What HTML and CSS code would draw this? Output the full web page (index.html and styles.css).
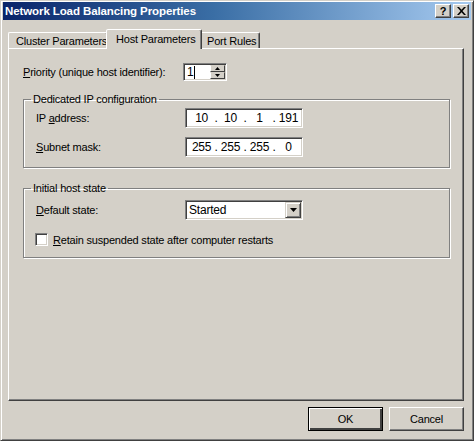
FILE: index.html
```html
<!DOCTYPE html>
<html>
<head>
<meta charset="utf-8">
<title>Network Load Balancing Properties</title>
<link rel="stylesheet" href="styles.css">
</head>
<body>
<div class="window">
  <div class="titlebar">
    <span class="title">Network Load Balancing Properties</span>
    <div class="caption-buttons">
      <span class="cap-btn help">?</span>
      <span class="cap-btn close">
        <svg width="9" height="8" viewBox="0 0 9 8"><path d="M0 0h2l2.5 2.7L7 0h2L5.5 4 9 8H7L4.5 5.3 2 8H0l3.5-4z" fill="#000"/></svg>
      </span>
    </div>
  </div>

  <div class="tabs">
    <div class="tab">Cluster Parameters</div>
    <div class="tab selected">Host Parameters</div>
    <div class="tab">Port Rules</div>
  </div>

  <div class="panel">
    <div class="row priority-row">
      <span class="label wide"><u>P</u>riority (unique host identifier):</span>
      <div class="spinner">
        <div class="spin-text">1<span class="caret"></span></div>
        <div class="spin-btns">
          <span class="spin-btn"><svg width="5" height="3" viewBox="0 0 5 3"><path d="M2.5 0 5 3H0z" fill="#000"/></svg></span>
          <span class="spin-btn"><svg width="5" height="3" viewBox="0 0 5 3"><path d="M0 0h5L2.5 3z" fill="#000"/></svg></span>
        </div>
      </div>
    </div>

    <fieldset class="group group-ip">
      <legend>Dedicated IP configuration</legend>
      <div class="row">
        <span class="label">IP <u>a</u>ddress:</span>
        <div class="ipbox">
          <span class="oct">10</span><span class="dot">.</span><span class="oct">10</span><span class="dot">.</span><span class="oct">1</span><span class="dot">.</span><span class="oct">191</span>
        </div>
      </div>
      <div class="row">
        <span class="label"><u>S</u>ubnet mask:</span>
        <div class="ipbox">
          <span class="oct">255</span><span class="dot">.</span><span class="oct">255</span><span class="dot">.</span><span class="oct">255</span><span class="dot">.</span><span class="oct">0</span>
        </div>
      </div>
    </fieldset>

    <fieldset class="group group-state">
      <legend>Initial host state</legend>
      <div class="row">
        <span class="label"><u>D</u>efault state:</span>
        <div class="select">
          <span class="select-text">Started</span>
          <span class="select-btn"><svg width="7" height="4" viewBox="0 0 7 4"><path d="M0 0h7L3.5 4z" fill="#000"/></svg></span>
        </div>
      </div>
      <div class="check-row">
        <span class="checkbox"></span>
        <span class="check-label"><u>R</u>etain suspended state after computer restarts</span>
      </div>
    </fieldset>
  </div>

  <div class="buttons">
    <div class="btn default">OK</div>
    <div class="btn">Cancel</div>
  </div>
</div>
</body>
</html>
```
FILE: styles.css
```css
* { box-sizing: border-box; }
html, body { margin: 0; padding: 0; }
body {
  width: 474px;
  height: 441px;
  background: #d4d0c8;
  font-family: "Liberation Sans", Arial, sans-serif;
  font-size: 11px;
  letter-spacing: -0.2px;
  color: #000;
  overflow: hidden;
}
.window {
  width: 474px;
  height: 441px;
  border: 1px solid;
  border-color: #d4d0c8 #404040 #404040 #d4d0c8;
  box-shadow: inset 1px 1px 0 #fff, inset -1px -1px 0 #808080;
  display: flex;
  flex-direction: column;
  padding: 1px 2px 0 2px;
}
.titlebar {
  height: 18px;
  background: linear-gradient(to right, #0a246a 0%, #3a6ea5 45%, #a6caf0 100%);
  display: flex;
  align-items: center;
  justify-content: space-between;
  padding: 0 2px 0 2px;
}
.title {
  color: #fff;
  font-weight: bold;
  font-size: 11.5px;
  letter-spacing: -0.1px;
}
.caption-buttons { display: flex; gap: 2px; }
.cap-btn {
  width: 16px;
  height: 14px;
  background: #d4d0c8;
  border: 1px solid;
  border-color: #fff #404040 #404040 #fff;
  box-shadow: inset -1px -1px 0 #808080;
  display: flex;
  align-items: center;
  justify-content: center;
  font-weight: bold;
  font-size: 11px;
  line-height: 1;
}
.tabs {
  display: flex;
  align-items: flex-end;
  height: 28px;
  padding-left: 5px;
}
.tab {
  height: 16px;
  padding: 0 4px 0 6px;
  border: 1px solid;
  border-bottom: none;
  border-color: #fff #404040 transparent #fff;
  box-shadow: inset -1px 0 0 #808080;
  border-radius: 2px 2px 0 0;
  display: flex;
  align-items: center;
  line-height: 14px;
  white-space: nowrap;
}
.tab:first-child { width: 100px; padding-left: 7px; }
.tab.selected {
  height: 20px;
  margin: 0 -2px -1px -2px;
  padding: 0 4px 2px 9px;
  width: 96px;
  background: #d4d0c8;
  z-index: 1;
}
.tab:last-child { width: 60px; padding-left: 6px; }
.panel {
  flex: 1;
  margin: 0 7px 0 5px;
  border: 1px solid;
  border-color: #fff #404040 #404040 #fff;
  box-shadow: inset -1px -1px 0 #808080;
  padding: 14px 0 0 14px;
  display: flex;
  flex-direction: column;
}
.row {
  display: flex;
  align-items: center;
}
.label { width: 149px; flex: none; }
.label.wide { width: 160px; }
.priority-row { height: 18px; }
.spinner {
  width: 44px;
  height: 18px;
  display: flex;
  background: #fff;
  border: 1px solid;
  border-color: #808080 #fff #fff #808080;
  box-shadow: inset 1px 1px 0 #404040, inset -1px -1px 0 #d4d0c8;
  padding: 2px 2px 2px 3px;
}
.spin-text {
  flex: 1;
  display: flex;
  align-items: center;
  line-height: 12px;
  font-size: 12px;
}
.caret {
  display: inline-block;
  width: 1px;
  height: 13px;
  background: #000;
  margin-left: 1px;
}
.spin-btns {
  width: 15px;
  display: flex;
  flex-direction: column;
  margin: -1px -1px -1px 0;
}
.spin-btn {
  flex: 1;
  background: #d4d0c8;
  border: 1px solid;
  border-color: #d4d0c8 #404040 #404040 #fff;
  display: flex;
  align-items: center;
  justify-content: center;
}
.group {
  margin: 0;
  width: 427px;
  border: 1px solid #808080;
  box-shadow: 1px 1px 0 #fff, inset 1px 1px 0 #fff;
  padding: 2px 12px 10px 12px;
  min-width: 0;
}
.group legend {
  padding: 0 2px;
  margin-left: -5px;
  line-height: 14px;
}
.group-ip { margin-top: 11px; }
.group-ip .row + .row { margin-top: 9px; }
.group-state { margin-top: 13px; padding-top: 5px; padding-bottom: 11px; }
.ipbox, .select {
  width: 118px;
  height: 20px;
  background: #fff;
  border: 1px solid;
  border-color: #808080 #fff #fff #808080;
  box-shadow: inset 1px 1px 0 #404040, inset -1px -1px 0 #d4d0c8;
  display: flex;
  align-items: center;
  font-size: 12px;
}
.ipbox { padding: 0 3px 0 5px; }
.oct { width: 22px; text-align: center; }
.dot { width: 8px; text-align: center; }
.select { padding: 2px 2px 2px 3px; }
.select-text { flex: 1; }
.select-btn {
  width: 16px;
  height: 16px;
  background: #d4d0c8;
  border: 1px solid;
  border-color: #d4d0c8 #404040 #404040 #d4d0c8;
  box-shadow: inset 1px 1px 0 #fff, inset -1px -1px 0 #808080;
  display: flex;
  align-items: center;
  justify-content: center;
  margin: -1px -1px -1px 0;
}
.check-row {
  display: flex;
  align-items: center;
  margin-top: 13px;
}
.checkbox {
  width: 13px;
  height: 13px;
  background: #fff;
  border: 1px solid;
  border-color: #808080 #fff #fff #808080;
  box-shadow: inset 1px 1px 0 #404040, inset -1px -1px 0 #d4d0c8;
  margin-left: -1px;
}
.check-label { margin-left: 5px; }
.buttons {
  height: 39px;
  display: flex;
  justify-content: flex-end;
  gap: 6px;
  padding: 6px 7px 0 0;
}
.btn {
  width: 75px;
  height: 24px;
  border: 1px solid;
  border-color: #fff #404040 #404040 #fff;
  box-shadow: inset -1px -1px 0 #808080;
  display: flex;
  align-items: center;
  justify-content: center;
}
.btn.default {
  border: 1px solid #000;
  box-shadow: inset 1px 1px 0 #fff, inset -2px -2px 0 #404040, inset -1px -1px 0 #404040;
}
```
